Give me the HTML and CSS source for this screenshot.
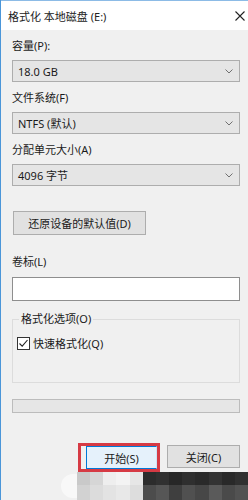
FILE: index.html
```
<!DOCTYPE html>
<html lang="zh">
<head>
<meta charset="utf-8">
<title>格式化 本地磁盘 (E:)</title>
<link rel="stylesheet" href="styles.css">
</head>
<body>
<div class="window">
  <div class="titlebar">
    <span class="title">格式化 本地磁盘 (E:)</span>
    <svg class="close" width="10" height="10" viewBox="0 0 10 10"><path d="M0.5 0.5 L9.5 9.5 M9.5 0.5 L0.5 9.5" stroke="#222" stroke-width="1.1" fill="none"/></svg>
  </div>
  <div class="content">
    <div class="field">
      <div class="label">容量(P):</div>
      <div class="combo"><span>18.0 GB</span><svg class="chev" width="8" height="5" viewBox="0 0 8 5"><path d="M0.5 0.5 L4 4 L7.5 0.5" stroke="#707070" fill="none"/></svg></div>
    </div>
    <div class="field">
      <div class="label">文件系统(F)</div>
      <div class="combo"><span>NTFS (默认)</span><svg class="chev" width="8" height="5" viewBox="0 0 8 5"><path d="M0.5 0.5 L4 4 L7.5 0.5" stroke="#707070" fill="none"/></svg></div>
    </div>
    <div class="field">
      <div class="label">分配单元大小(A)</div>
      <div class="combo"><span>4096 字节</span><svg class="chev" width="8" height="5" viewBox="0 0 8 5"><path d="M0.5 0.5 L4 4 L7.5 0.5" stroke="#707070" fill="none"/></svg></div>
    </div>
    <button class="btn restore">还原设备的默认值(D)</button>
    <div class="label vol">卷标(L)</div>
    <div class="input"></div>
    <fieldset class="group">
      <legend>格式化选项(O)</legend>
      <div class="check-row">
        <span class="checkbox"><svg width="11" height="11" viewBox="0 0 11 11"><path d="M1.5 5.5 L4.2 8.2 L9.5 2" stroke="#222" stroke-width="1.1" fill="none"/></svg></span>
        <span>快速格式化(Q)</span>
      </div>
    </fieldset>
    <div class="progress"></div>
    <div class="actions">
      <span class="highlight"><button class="btn start">开始(S)</button></span>
      <button class="btn closebtn">关闭(C)</button>
    </div>
  </div>
  <div class="mosaic-row">
    <span class="blob"></span>
    <div class="mosaic">
      <i></i><i></i><i></i><i></i><i></i><i></i><i></i><i></i><i></i><i></i><i></i><i></i><i></i>
      <i></i><i></i><i></i><i></i><i></i><i></i><i></i><i></i><i></i><i></i><i></i><i></i><i></i>
    </div>
  </div>
</div>
</body>
</html>
```
FILE: styles.css
```
* { box-sizing: border-box; }
html, body { margin: 0; padding: 0; }
body {
  width: 248px;
  height: 500px;
  overflow: hidden;
  font-family: "Noto Sans", "Noto Sans CJK SC", sans-serif;
  font-size: 11px;
  color: #1a1a1a;
}
.window {
  width: 248px;
  height: 500px;
  background: #f0f0f0;
  border-left: 1px solid #4a96d9;
  display: flex;
  flex-direction: column;
}
.titlebar {
  height: 30px;
  background: #ffffff;
  border-top: 1px solid #8cbbe6;
  display: flex;
  align-items: center;
  justify-content: space-between;
  padding: 0 3px 0 7px;
}
.title { font-size: 11px; color: #222; }
.close { display: block; }
.content {
  padding: 8px 8px 0 11px;
  display: flex;
  flex-direction: column;
  align-items: stretch;
}
.label {
  height: 16px;
  line-height: 16px;
}
.field { margin-bottom: 8px; }
.combo {
  margin-top: 6px;
  height: 22px;
  background: #e5e5e5;
  border: 1px solid #adadad;
  display: flex;
  align-items: center;
  justify-content: space-between;
  padding: 0 6px 0 5px;
}
.chev { display: block; }
.btn {
  font-family: inherit;
  font-size: 11px;
  color: #1a1a1a;
  background: #e1e1e1;
  border: 1px solid #adadad;
  padding: 0;
  margin: 0;
}
.restore {
  margin-top: 17px;
  margin-left: 1px;
  width: 133px;
  height: 24px;
  align-self: flex-start;
}
.vol { margin-top: 19px; }
.input {
  margin-top: 7px;
  height: 24px;
  background: #ffffff;
  border: 1px solid #8e8e8e;
}
.group {
  margin: 10px 0 0 0;
  padding: 0 0 0 4px;
  height: 72px;
  border: 1px solid #dcdcdc;
  min-width: 0;
}
.group legend {
  padding: 0 2px;
  margin-left: 2px;
  line-height: 16px;
  height: 16px;
}
.check-row {
  margin-top: 8px;
  display: flex;
  align-items: center;
  gap: 3px;
  height: 16px;
}
.checkbox {
  width: 13px;
  height: 13px;
  background: #ffffff;
  border: 1px solid #333333;
  display: flex;
  align-items: center;
  justify-content: center;
}
.checkbox svg { display: block; }
.progress {
  margin-top: 16px;
  height: 14px;
  background: #e6e6e6;
  border: 1px solid #bcbcbc;
}
.actions {
  margin-top: 30px;
  display: flex;
  justify-content: flex-end;
  align-items: flex-start;
  gap: 7px;
  height: 29px;
}
.highlight {
  display: flex;
  width: 82px;
  height: 29px;
  border: 3px solid #d63a44;
  padding-left: 5px;
}
.start {
  width: 71px;
  height: 23px;
  background: #e5f1fb;
  border: 1px solid #0078d7;
  border-right-color: #cce4f7;
}
.closebtn {
  margin-top: 2px;
  width: 73px;
  height: 23px;
}
.mosaic-row {
  display: flex;
  align-items: stretch;
  height: 28px;
}
.blob {
  width: 76px;
  display: flex;
  justify-content: flex-end;
  align-items: center;
}
.blob::after {
  content: "";
  width: 16px;
  height: 24px;
  border-radius: 12px 0 0 12px;
  background: #f8f8f8;
}
.mosaic {
  flex: 1;
  display: grid;
  grid-template-columns: repeat(13, 1fr);
  grid-template-rows: 13px 15px;
}
.mosaic i { display: block; }
.mosaic i:nth-child(1) { background: #c9c9c9; }
.mosaic i:nth-child(2) { background: #d6d6d6; }
.mosaic i:nth-child(3) { background: #eeeeee; }
.mosaic i:nth-child(4) { background: #f3f3f3; }
.mosaic i:nth-child(5) { background: #e6e6e6; }
.mosaic i:nth-child(6) { background: #2c2c2c; }
.mosaic i:nth-child(7) { background: #313131; }
.mosaic i:nth-child(8) { background: #272727; }
.mosaic i:nth-child(9) { background: #2f2f2f; }
.mosaic i:nth-child(10) { background: #2a2a2a; }
.mosaic i:nth-child(11) { background: #333333; }
.mosaic i:nth-child(12) { background: #292929; }
.mosaic i:nth-child(13) { background: #303030; }
.mosaic i:nth-child(14) { background: #d2d2d2; }
.mosaic i:nth-child(15) { background: #dcdcdc; }
.mosaic i:nth-child(16) { background: #e3e3e3; }
.mosaic i:nth-child(17) { background: #e8e8e8; }
.mosaic i:nth-child(18) { background: #dddddd; }
.mosaic i:nth-child(19) { background: #4c4c4c; }
.mosaic i:nth-child(20) { background: #565656; }
.mosaic i:nth-child(21) { background: #3f3f3f; }
.mosaic i:nth-child(22) { background: #505050; }
.mosaic i:nth-child(23) { background: #474747; }
.mosaic i:nth-child(24) { background: #5a5a5a; }
.mosaic i:nth-child(25) { background: #4a4a4a; }
.mosaic i:nth-child(26) { background: #525252; }
```
